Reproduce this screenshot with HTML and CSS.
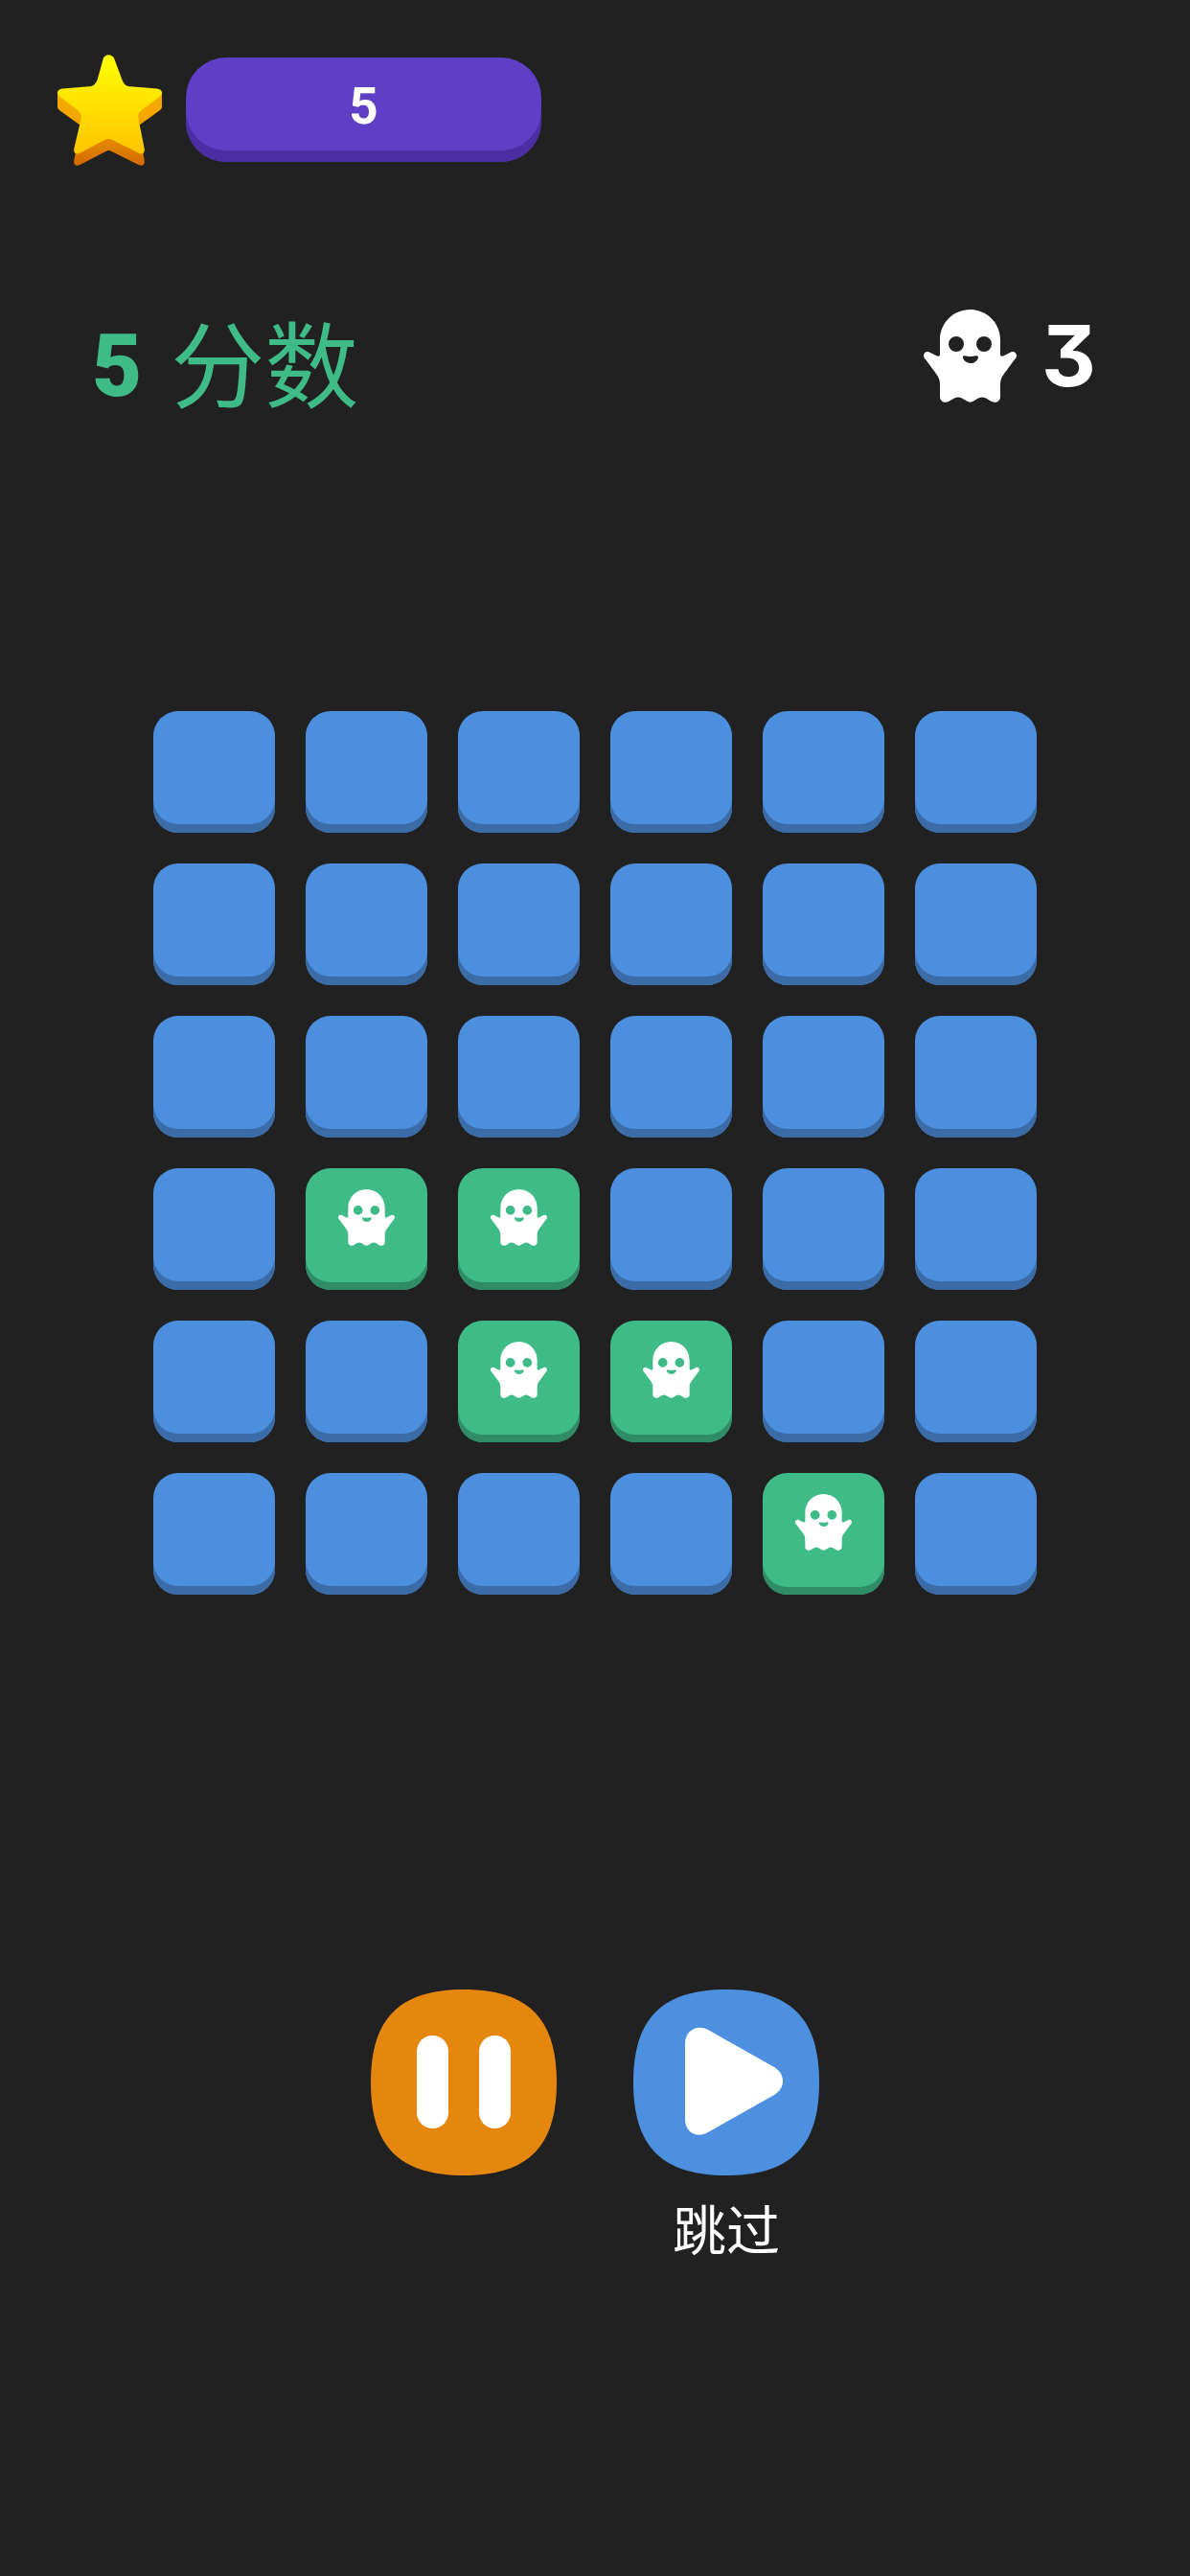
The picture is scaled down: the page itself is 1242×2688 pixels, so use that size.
FILE: index.html
```html
<!doctype html>
<html lang="zh-CN">
  <head>
    <meta charset="utf-8">
    <meta name="viewport" content="width=device-width, initial-scale=1">
    <title>分数</title>
    <link rel="stylesheet" href="styles.css">
  </head>
  <body>
    <svg class="defs">
      <linearGradient id="star-top" x1="0" y1="0" x2="0" y2="1">
        <stop offset="0" stop-color="#ffff00"/>
        <stop offset="1" stop-color="#ffc400"/>
      </linearGradient>
      <linearGradient id="star-side" x1="0" y1="0" x2="0" y2="1">
        <stop offset="0.3" stop-color="#f5a800"/>
        <stop offset="1" stop-color="#d26a00"/>
      </linearGradient>
      <!-- ghost, eyes and mouth are holes so the tile colour shows through -->
      <symbol id="ghost" viewBox="0 0 97 97">
        <path fill="#fff" fill-rule="evenodd" d="M17 31.5C17 14 31 0 48.5 0C66 0 80 14 80 31.5V47C80 49 82 49 84 48L91 44.5C94 43 97 45 97 48C97 50 96 51 95 52L84 67C81 71 80 74 80 78V91C80 96 75 98 71 96L65 92.5C62 91 60 91 57 92.5L52 95.5C49.5 97 47.5 97 45 95.5L40 92.5C37 91 35 91 32 92.5L26 96C22 98 17 96 17 91V78C17 74 16 71 13 67L2 52C1 51 0 50 0 48C0 45 3 43 6 44.5L13 48C15 49 17 49 17 47ZM26 36a8 8 0 1 0 16 0a8 8 0 1 0 -16 0ZM55 36a8 8 0 1 0 16 0a8 8 0 1 0 -16 0ZM41 49.5C41 48.5 42 48 43 48.3C46.5 49.3 50.500 49.3 54 48.300C55 48 57 48.500 57 49.500C57 53 53 56 49 56C45 56 41 53 41 49.500Z"/>
      </symbol>
    </svg>

    <div class="top-bar">
      <svg class="star" viewBox="0 0 109 123" preserveAspectRatio="none">
        <path fill="url(#star-side)" d="M108 45V58C108 60 107 61 106 62L84 79L90 117C91 122 88 124 84 122L56 107C54 106 53 106 51 107L24 122C20 124 17 122 18 117L25 79L3 62C2 61 1 60 1 58V45Z"/>
        <path fill="url(#star-top)" d="M48 5C50 0 57 0 59 5L67 28C69 33 71 36 76 36L103 38.500C108 39 110 44 106 47L87 62C84 65 83 68 84 72L90 104C91 109 88 111 84 109L58 95C55 93 52 93 49 95L24 109C20 111 17 109 18 104L25 72C26 68 25 65 22 62L3 47C-1 44 1 39 6 38.500L33 36C38 36 40 33 42 28Z"/>
      </svg>
      <div class="level-pill">5</div>
    </div>

    <div class="score-row">
      <div class="score">
        <span class="score-num">5</span>
        <span class="score-label">分数</span>
      </div>
      <div class="lives">
        <svg class="lives-ghost"><use href="#ghost"/></svg>
        <span class="lives-num">3</span>
      </div>
    </div>

    <div class="board">
      <div class="tile"></div><div class="tile"></div><div class="tile"></div><div class="tile"></div><div class="tile"></div><div class="tile"></div>
      <div class="tile"></div><div class="tile"></div><div class="tile"></div><div class="tile"></div><div class="tile"></div><div class="tile"></div>
      <div class="tile"></div><div class="tile"></div><div class="tile"></div><div class="tile"></div><div class="tile"></div><div class="tile"></div>
      <div class="tile"></div>
      <div class="tile tile-on"><svg class="tile-ghost"><use href="#ghost"/></svg></div>
      <div class="tile tile-on"><svg class="tile-ghost"><use href="#ghost"/></svg></div>
      <div class="tile"></div><div class="tile"></div><div class="tile"></div>
      <div class="tile"></div><div class="tile"></div>
      <div class="tile tile-on"><svg class="tile-ghost"><use href="#ghost"/></svg></div>
      <div class="tile tile-on"><svg class="tile-ghost"><use href="#ghost"/></svg></div>
      <div class="tile"></div><div class="tile"></div>
      <div class="tile"></div><div class="tile"></div><div class="tile"></div><div class="tile"></div>
      <div class="tile tile-on"><svg class="tile-ghost"><use href="#ghost"/></svg></div>
      <div class="tile"></div>
    </div>

    <div class="controls">
      <div class="control">
        <svg class="control-btn" viewBox="0 0 194 194">
          <path fill="#e5870e" d="M97 0C164 0 194 30 194 97C194 164 164 194 97 194C30 194 0 164 0 97C0 30 30 0 97 0Z"/>
          <rect x="48" y="48" width="33" height="97" rx="16.500" fill="#fff"/>
          <rect x="113" y="48" width="33" height="97" rx="16.500" fill="#fff"/>
        </svg>
      </div>
      <div class="control">
        <svg class="control-btn" viewBox="0 0 194 194">
          <path fill="#4d90df" d="M97 0C164 0 194 30 194 97C194 164 164 194 97 194C30 194 0 164 0 97C0 30 30 0 97 0Z"/>
          <path fill="#fff" d="M54 57C54 43 66 36 78 42L147 81C159 88 159 103 147 110L78 149C66 156 54 149 54 135Z"/>
        </svg>
        <span class="control-label">跳过</span>
      </div>
    </div>
  </body>
</html>
```

FILE: styles.css
```css
body {
  background-color: #212121;
  color: #fff;
  font-family: Roboto, "Noto Sans CJK SC", sans-serif;
  margin: 0;
  min-height: 2688px;
}
.defs {
  height: 0;
  position: absolute;
  width: 0;
}
.top-bar {
  align-items: flex-start;
  display: flex;
  gap: 24px;
  padding: 56px 0 0 59px;
}
.star {
  height: 117px;
  width: 111px;
}
.level-pill {
  background-color: #5f3fc5;
  border-radius: 42px;
  box-shadow: inset 0 -12px 0 #4b2ea3;
  font-size: 53px;
  font-weight: 700;
  height: 109px;
  line-height: 102px;
  margin-top: 4px;
  text-align: center;
  width: 371px;
}
.score-row {
  align-items: flex-start;
  display: flex;
  justify-content: space-between;
  margin-top: 150px;
  padding: 0 98px 0 96px;
}
.score {
  align-items: flex-start;
  color: #3fbb88;
  display: flex;
  gap: 30px;
}
.score-num {
  font-size: 90px;
  font-weight: 900;
  line-height: 88px;
  padding-top: 16px;
}
.score-label {
  font-family: "Noto Sans CJK SC", sans-serif;
  font-size: 98px;
  line-height: 104px;
}
.lives {
  align-items: center;
  display: flex;
  gap: 26px;
}
.lives-ghost {
  height: 97px;
  width: 97px;
}
.lives-num {
  font-family: Inter, Roboto, sans-serif;
  font-feature-settings: "cv09";
  font-size: 88px;
  font-weight: 700;
  line-height: 97px;
}
.board {
  display: grid;
  gap: 32px;
  grid-template-columns: repeat(6, 127px);
  justify-content: center;
  margin-top: 315px;
}
.tile {
  background-color: #4c8fdf;
  border-radius: 26px;
  box-shadow: inset 0 -9px 0 #3b6ca8;
  box-sizing: border-box;
  display: flex;
  height: 127px;
  justify-content: center;
  padding-top: 22px;
}
.tile-on {
  background-color: #3fbb88;
  box-shadow: inset 0 -8px 0 #2f8c66;
}
.tile-ghost {
  height: 59px;
  width: 59px;
}
.controls {
  display: flex;
  gap: 80px;
  justify-content: center;
  margin-top: 412px;
}
.control {
  align-items: center;
  display: flex;
  flex-direction: column;
  gap: 19px;
  width: 194px;
}
.control-btn {
  display: block;
  height: 194px;
  width: 194px;
}
.control-label {
  font-family: "Noto Sans CJK SC", sans-serif;
  font-size: 56px;
  line-height: 70px;
}
```
